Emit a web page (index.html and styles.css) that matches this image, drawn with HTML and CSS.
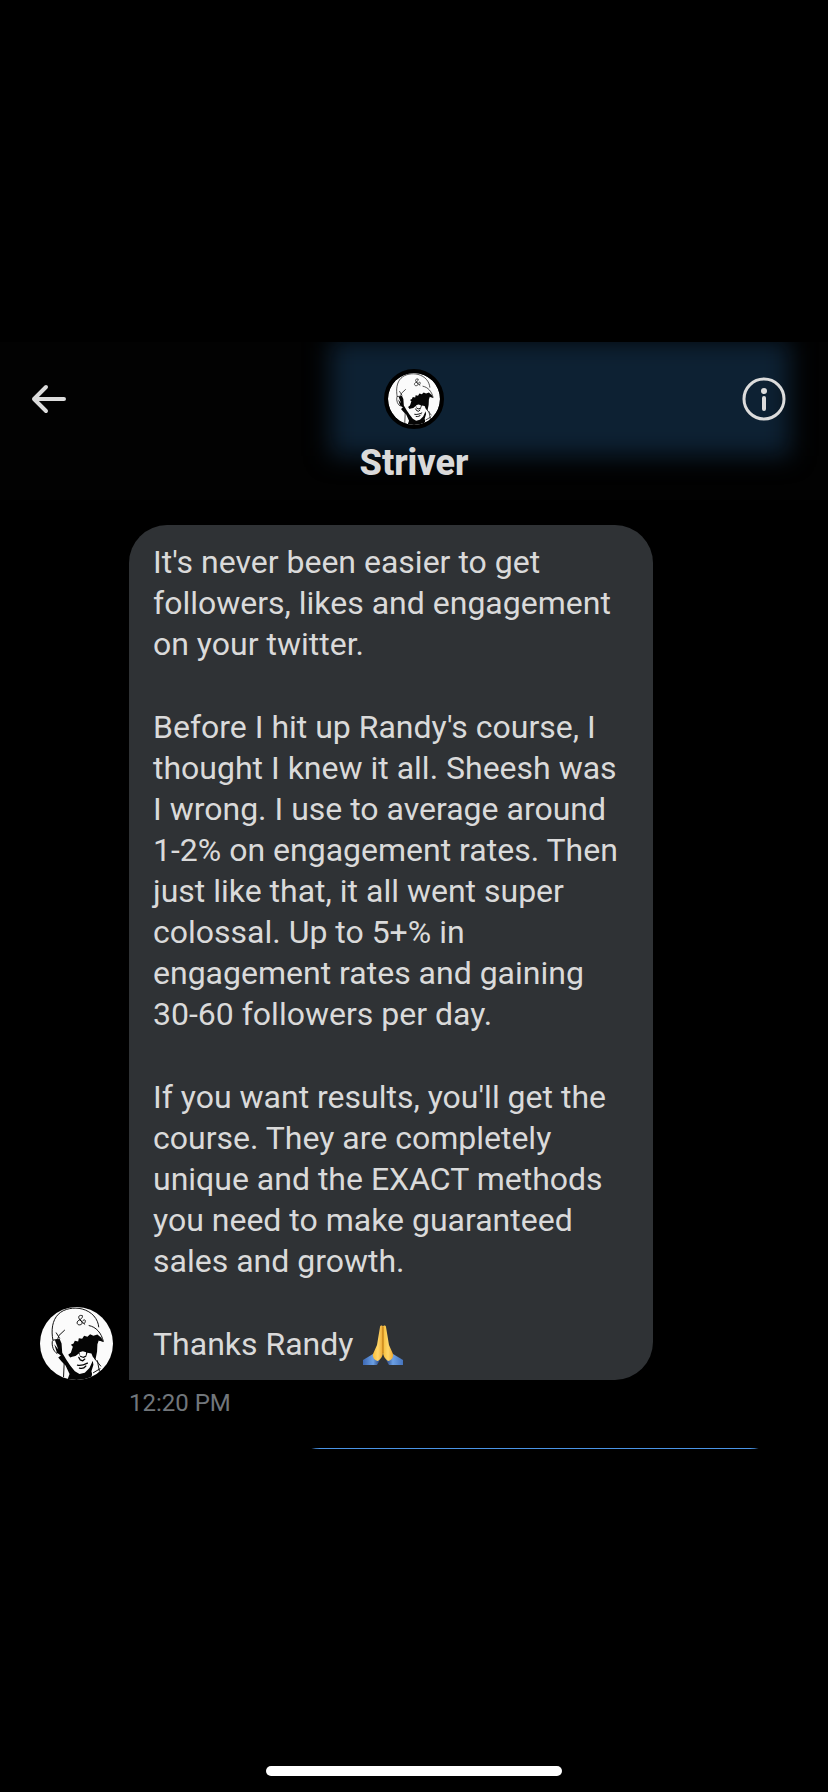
FILE: index.html
```html
<!DOCTYPE html>
<html lang="en">
<head>
<meta charset="utf-8">
<meta name="viewport" content="width=device-width, initial-scale=1">
<title>Striver</title>
<link rel="stylesheet" href="styles.css">
</head>
<body>
<svg class="defs" aria-hidden="true">
  <symbol id="portrait" viewBox="33 38 220 220">
    <clipPath id="disc"><circle cx="143" cy="148" r="110"/></clipPath>
    <g clip-path="url(#disc)">
      <rect x="33" y="38" width="220" height="220" fill="#fbfbfb"/>
      <g fill="none" stroke="#111" stroke-width="3" stroke-linecap="round" stroke-linejoin="round">
        <path d="M72 138C66 108 70 78 88 60C106 42 136 38 160 44C190 52 208 74 210 98"/>
        <path d="M181 94C202 98 218 116 224 142L212 138"/>
        <path d="M72 138L84 136M107 108L90 124L84 142M82 116L92 132"/>
        <path d="M70 142C68 156 74 172 84 178"/>
        <path d="M106 204L104 248M198 194L216 216M194 236L214 224M206 200L212 232"/>
        <path d="M160 64C152 60 146 68 152 74C158 80 164 88 156 91C146 95 140 84 150 78C158 74 164 68 160 64M152 76L168 90M162 80C168 70 174 82 166 88"/>
      </g>
      <path d="M78 138L92 134L98 148L100 176L112 196L124 214L138 232L152 240L168 236L182 222L192 200L194 212L188 232L190 240L186 262H114L122 240L110 214L98 202L88 190L96 184L84 176L76 150L88 166Z" fill="#050505"/>
      <path d="M124 190L118 182L126 176L132 158L126 152L134 148L138 140L148 142L150 132L160 134L166 125L176 128L184 120L194 125L206 121L218 131L224 142L210 139L206 150L205 172L200 198L192 188L188 178L176 176L172 188L164 192L154 188L150 178L140 186L130 188Z" fill="#050505"/>
      <path d="M152 174L162 171L172 174L171 184L163 188L153 184Z" fill="#fbfbfb"/>
      <g fill="none" stroke="#050505" stroke-linecap="round" stroke-linejoin="round" stroke-width="4">
        <path d="M150 190L154 197L162 200L168 195"/>
        <path d="M146 213C154 215 166 212 176 207M152 222C160 224 168 220 171 216"/>
      </g>
    </g>
  </symbol>
</svg>

<main class="screen">
  <header class="topbar">
    <div class="glow"></div>
    <button class="icon-button" type="button" aria-label="Back">
      <svg class="icon" viewBox="0 0 44 44" fill="none" stroke="#dcdcdc" stroke-width="4" stroke-linecap="round" stroke-linejoin="round"><path d="M36 22H6M18 10L6 22L18 34"/></svg>
    </button>
    <div class="contact">
      <svg class="contact-avatar" role="img" aria-label="Striver"><use href="#portrait"/></svg>
      <h1 class="contact-name">Striver</h1>
    </div>
    <button class="icon-button" type="button" aria-label="Conversation info">
      <svg class="icon" viewBox="0 0 44 44"><circle cx="22" cy="22" r="20" fill="none" stroke="#dcdcdc" stroke-width="3"/><circle cx="22" cy="14" r="3" fill="#dcdcdc"/><path d="M22 21V32" stroke="#dcdcdc" stroke-width="4" stroke-linecap="round"/></svg>
    </button>
  </header>

  <section class="thread">
    <div class="message">
      <svg class="sender-avatar" role="img" aria-label="Striver"><use href="#portrait"/></svg>
      <div class="bubble">
        <p>It's never been easier to get<br>followers, likes and engagement<br>on your twitter.</p>
        <p>Before I hit up Randy's course, I<br>thought I knew it all. Sheesh was<br>I wrong. I use to average around<br>1-2% on engagement rates. Then<br>just like that, it all went super<br>colossal. Up to 5+% in<br>engagement rates and gaining<br>30-60 followers per day.</p>
        <p>If you want results, you'll get the<br>course. They are completely<br>unique and the EXACT methods<br>you need to make guaranteed<br>sales and growth.</p>
        <p class="closing">Thanks Randy
          <svg class="hands" viewBox="0 0 40 40" role="img" aria-label="Folded hands">
            <defs>
              <linearGradient id="skin"><stop offset="0" stop-color="#f7bd3a"/><stop offset=".5" stop-color="#ffd76a"/><stop offset="1" stop-color="#eda72f"/></linearGradient>
              <linearGradient id="cuffLeft"><stop offset="0" stop-color="#3c68b4"/><stop offset=".6" stop-color="#6ba0e4"/><stop offset="1" stop-color="#263f78"/></linearGradient>
              <linearGradient id="cuffRight"><stop offset="0" stop-color="#263f78"/><stop offset=".4" stop-color="#6ba0e4"/><stop offset="1" stop-color="#4674bd"/></linearGradient>
            </defs>
            <path d="M0 35L10 29L17 35L14 40H0Z" fill="url(#cuffLeft)"/>
            <path d="M40 35L30 29L23 35L26 40H40Z" fill="url(#cuffRight)"/>
            <path d="M20 2C20 0 17 0 17 2L14 20L10 29C9 32 12 36 15 36C18 34 20 31 20 27Z" fill="url(#skin)"/>
            <path d="M20 2C20 0 23 0 23 2L26 20L30 29C31 32 28 36 25 36C22 34 20 31 20 27Z" fill="url(#skin)"/>
            <path d="M20 2V28" stroke="#b87512" stroke-width="1"/>
          </svg>
        </p>
      </div>
    </div>
    <time class="timestamp">12:20 PM</time>
    <div class="next-message"><div class="own-bubble"></div></div>
  </section>

  <div class="home-indicator"></div>
</main>
</body>
</html>
```
FILE: styles.css
```css
* { box-sizing: border-box; }

body {
  margin: 0;
  background: #000;
  color: #dadada;
  font-family: Roboto, "Liberation Sans", sans-serif;
}

.defs {
  position: absolute;
  width: 0;
  height: 0;
}

.screen {
  display: flex;
  flex-direction: column;
  min-height: 100vh;
  padding: 342px 0 16px;
}

.topbar {
  position: relative;
  display: grid;
  grid-template-columns: 44px 1fr 44px;
  align-items: start;
  padding: 27px 42px 15px;
  overflow: hidden;
  background: #020202;
}

.glow {
  position: absolute;
  top: -2px;
  right: 38px;
  left: 330px;
  height: 116px;
  background: #0d2133;
  filter: blur(12px);
}

.icon-button {
  position: relative;
  margin-top: 8px;
  padding: 0;
  border: 0;
  background: none;
}

.icon-button:first-of-type { margin-left: -14px; }

.icon {
  display: block;
  width: 44px;
  height: 44px;
}

.contact {
  position: relative;
  display: flex;
  flex-direction: column;
  align-items: center;
  gap: 12px;
}

.contact-avatar {
  width: 60px;
  height: 60px;
  border: 4px solid #000;
  border-radius: 50%;
  background: #000;
}

.contact-name {
  margin: 0;
  font-size: 36px;
  font-weight: 800;
  line-height: 44px;
}

.thread { padding: 25px 40px 0; }

.message {
  display: flex;
  align-items: flex-end;
  gap: 16px;
}

.sender-avatar {
  flex: none;
  width: 73px;
  height: 73px;
}

.bubble {
  flex: 0 1 524px;
  padding: 17px 24px 15px;
  border-radius: 38px 38px 38px 0;
  background: #2f3235;
  font-size: 32px;
  line-height: 41px;
}

.bubble p { margin: 0 0 42px; }

.bubble .closing {
  display: flex;
  gap: 10px;
  align-items: center;
  margin: 0;
}

.hands {
  width: 40px;
  height: 40px;
}

.timestamp {
  display: block;
  margin: 8px 0 0 89px;
  color: #71767b;
  font-size: 24px;
  line-height: 30px;
}

.next-message {
  display: flex;
  justify-content: flex-end;
  height: 1px;
  margin-top: 30px;
  overflow: hidden;
}

.own-bubble {
  flex: 0 1 506px;
  height: 80px;
  border-radius: 38px;
  background: #4a94e6;
}

.home-indicator {
  width: 296px;
  height: 10px;
  margin: auto auto 0;
  border-radius: 5px;
  background: #fff;
}
```
